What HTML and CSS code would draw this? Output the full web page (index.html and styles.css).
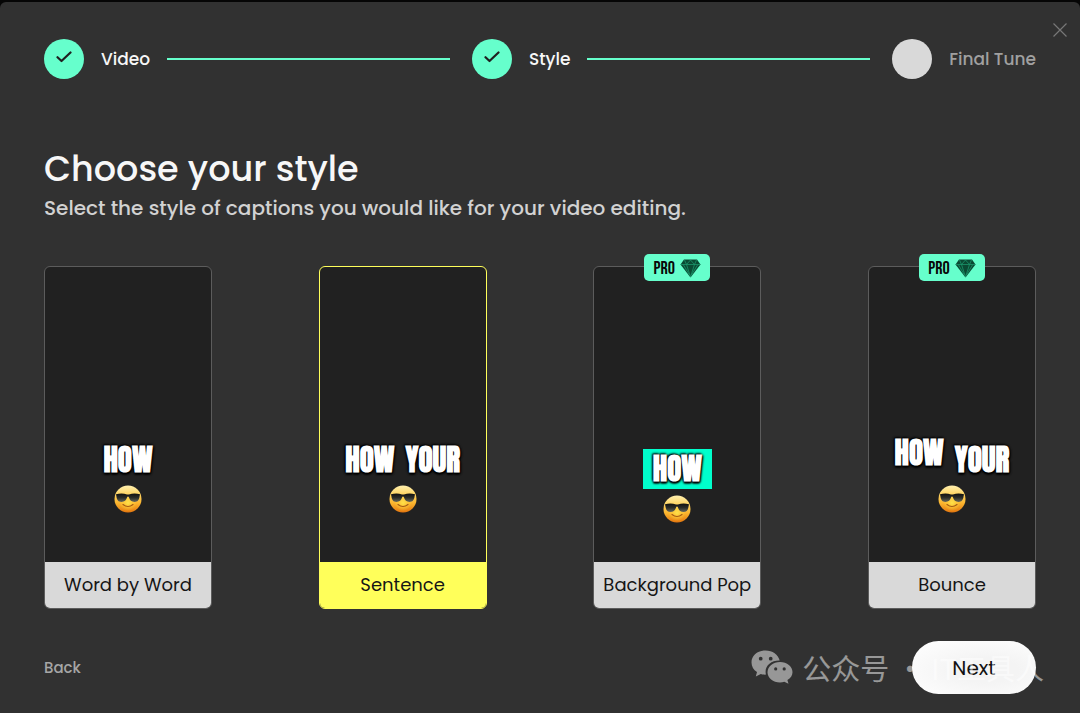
FILE: index.html
```html
<!DOCTYPE html>
<html lang="en">
<head>
<meta charset="utf-8">
<meta name="viewport" content="width=device-width, initial-scale=1">
<title>Choose your style</title>
<link rel="stylesheet" href="styles.css">
</head>
<body>
<svg class="defs" aria-hidden="true">
  <defs>
    <linearGradient id="face" x1="0" y1="0" x2="0" y2="1">
      <stop offset="0" stop-color="#fff0b0"/><stop offset=".3" stop-color="#ffd768"/><stop offset=".65" stop-color="#fbb52e"/><stop offset="1" stop-color="#e3760f"/>
    </linearGradient>
    <radialGradient id="glow" cx=".5" cy=".62" r=".35">
      <stop offset="0" stop-color="#ffe24a"/><stop offset="1" stop-color="#ffd53a" stop-opacity="0"/>
    </radialGradient>
    <linearGradient id="lens" x1="0" y1="0" x2="0" y2="1">
      <stop offset="0" stop-color="#111"/><stop offset=".5" stop-color="#2b2d28"/><stop offset="1" stop-color="#66675a"/>
    </linearGradient>
    <symbol id="cool" viewBox="0 0 28 28">
      <circle cx="14" cy="14" r="13.5" fill="url(#face)"/>
      <circle cx="14" cy="15" r="12" fill="url(#glow)"/>
      <path d="M2 9.2Q8 7.8 13 9.4h2Q20 7.8 26 9.2l-.4 2.1c-.5 4-2 5.6-5 5.6-3.200 0-4.800-1.600-5.700-4.600-.4-1-1.400-1-1.800 0-.9 3-2.500 4.600-5.700 4.600-3 0-4.500-1.600-5-5.600z" fill="url(#lens)"/>
      <path d="M9 19.500Q14 23.500 19 19.500" fill="none" stroke="#a65b13" stroke-width="1.200" stroke-linecap="round"/>
    </symbol>
    <symbol id="check" viewBox="0 0 16 12">
      <path d="M1.500 6.200 5.500 10 14.500 1.500" fill="none" stroke="#202020" stroke-width="2.200" stroke-linecap="round" stroke-linejoin="round"/>
    </symbol>
    <symbol id="gem" viewBox="0 0 21 19">
      <path d="M4 .5h13l3.500 5L10.500 18.500.5 5.500z" fill="#0a4a33"/>
      <path d="M4.500 1 6.500 5.500 10.500 1l4 4.500 2-4.500M.5 5.500h20M6.500 5.500l4 12.500 4-12.500M3.500 6l6 10M17.500 6l-6 10" fill="none" stroke="#1b9469" stroke-width=".8"/>
    </symbol>
  </defs>
</svg>
<main class="panel">
  <button class="close" type="button" aria-label="Close">
    <svg viewBox="0 0 14 14" width="14" height="14"><path d="M.5.5l13 13M13.500.5l-13 13" stroke="#777" stroke-width="1.200"/></svg>
  </button>
  <ol class="steps">
    <li class="step step-done"><span class="dot"><svg class="check"><use href="#check"/></svg></span><span class="step-name">Video</span><span class="line"></span></li>
    <li class="step step-done"><span class="dot"><svg class="check"><use href="#check"/></svg></span><span class="step-name">Style</span><span class="line"></span></li>
    <li class="step"><span class="dot"></span><span class="step-name">Final Tune</span></li>
  </ol>
  <header class="intro">
    <h1 class="title">Choose your style</h1>
    <p class="subtitle">Select the style of captions you would like for your video editing.</p>
  </header>
  <form class="form">
    <div class="cards">
      <label class="card">
        <input class="radio" type="radio" name="style" value="word">
        <span class="preview"><span class="caption"><span>HOW</span></span><svg class="emoji"><use href="#cool"/></svg></span>
        <span class="card-name">Word by Word</span>
      </label>
      <label class="card">
        <input class="radio" type="radio" name="style" value="sentence" checked>
        <span class="preview"><span class="caption"><span>HOW</span><span>YOUR</span></span><svg class="emoji"><use href="#cool"/></svg></span>
        <span class="card-name">Sentence</span>
      </label>
      <label class="card">
        <input class="radio" type="radio" name="style" value="pop">
        <span class="badge">PRO<svg class="gem"><use href="#gem"/></svg></span>
        <span class="preview preview-pop"><span class="caption"><span>HOW</span></span><svg class="emoji"><use href="#cool"/></svg></span>
        <span class="card-name">Background Pop</span>
      </label>
      <label class="card">
        <input class="radio" type="radio" name="style" value="bounce">
        <span class="badge">PRO<svg class="gem"><use href="#gem"/></svg></span>
        <span class="preview preview-bounce"><span class="caption"><span>HOW</span><span>YOUR</span></span><svg class="emoji"><use href="#cool"/></svg></span>
        <span class="card-name">Bounce</span>
      </label>
    </div>
    <div class="actions">
      <button class="back" type="button">Back</button>
      <button class="next" type="submit">Next</button>
      <div class="watermark">
        <svg class="wechat" viewBox="0 0 42 34">
          <path fill="#979797" fill-rule="evenodd" d="M14.500.5C6.500.5.500 5.700.500 12.500c0 4 2 7.300 5.500 9.600L4.800 26.500l5-2.500c1.700.5 3.300.7 5.200.6-2.200-8 4.700-14.300 13.700-14C27.300 4.500 21.500.5 14.500.5zM9.700 6.800a1.900 1.900 0 1 1 0 3.800 1.900 1.900 0 0 1 0-3.800zm10 0a1.900 1.900 0 1 1 0 3.800 1.900 1.900 0 0 1 0-3.800z"/>
          <path fill="#979797" fill-rule="evenodd" d="M29 12c-7 0-12.500 4.600-12.500 10.200S22 32.400 29 32.400c1.500 0 3-.2 4.300-.6l4.200 2-1.100-3.700c3.200-2 5.100-4.700 5.100-7.900C41.500 16.600 36 12 29 12zm-4.300 5.300a1.600 1.600 0 1 1 0 3.200 1.600 1.600 0 0 1 0-3.200zm8.500 0a1.600 1.600 0 1 1 0 3.200 1.600 1.600 0 0 1 0-3.200z"/>
        </svg>
        <span>公众号 · IT工具人</span>
      </div>
    </div>
  </form>
</main>
</body>
</html>
```
FILE: styles.css
```css
* { box-sizing: border-box; }
body {
  margin: 0;
  padding-top: 2px;
  min-height: 100vh;
  display: flex;
  background: #050505;
  font-family: Poppins, Inter, "Liberation Sans", sans-serif;
  color: #f7f7f7;
}
button { border: 0; background: none; font: inherit; padding: 0; cursor: pointer; }
.defs { position: absolute; width: 0; height: 0; }
.panel {
  position: relative;
  flex: 1;
  padding: 37px 44px 19px;
  background: #313131;
  border-radius: 6px 6px 0 0;
}
.close { position: absolute; top: 21px; right: 13px; width: 14px; height: 14px; display: flex; }

.steps { display: flex; gap: 22px; margin: 0; padding: 0; list-style: none; }
.step { display: flex; align-items: center; gap: 17px; color: #a0a0a0; font-size: 17px; line-height: 28px; font-weight: 500; }
.step-done { flex: 1 1 auto; color: #f7f7f7; }
.step-name { white-space: nowrap; }
.dot {
  display: grid;
  place-items: center;
  width: 40px;
  height: 40px;
  flex: none;
  border-radius: 50%;
  background: #d9d9d9;
}
.step-done .dot { background: #66ffcc; }
.check { width: 16px; height: 12px; margin-bottom: 4px; }
.line { flex: 1; height: 2px; background: #66ffcc; }

.intro { margin-top: 65px; }
.title { margin: 0; font-size: 35px; line-height: 50px; font-weight: 500; }
.subtitle { margin: 0; font-size: 20px; line-height: 28px; font-weight: 500; color: #d2d2d2; }

.cards { display: grid; grid-template-columns: repeat(4, 168px); justify-content: space-between; margin-top: 44px; }
.card {
  position: relative;
  display: flex;
  flex-direction: column;
  border: 1px solid #5c5c5c;
  border-radius: 6px;
  background: #212121;
  cursor: pointer;
}
.card:has(:checked) { border-color: #ffff5a; }
.radio { position: absolute; inset: 0; margin: 0; opacity: 0; }
.preview {
  display: flex;
  flex-direction: column;
  align-items: center;
  justify-content: flex-end;
  gap: 7px;
  height: 295px;
  padding-bottom: 49px;
}
.caption {
  display: flex;
  gap: 11px;
  font-family: Impact, Anton, "Liberation Sans Narrow", "Liberation Sans", sans-serif;
  font-size: 29px;
  line-height: 36px;
  font-weight: 700;
  color: #fff;
  text-shadow: 0 0 3px #000, 1px 1px 2px #000, -1px -1px 2px #000, 0 2px 2px #000;
}
.preview-pop { padding-bottom: 39px; gap: 6px; }
.preview-pop .caption { padding: 2px 10px; background: #00ffcc; }
.preview-bounce .caption { align-items: flex-start; }
.preview-bounce .caption :first-child { margin-top: -7px; }
.emoji { width: 28px; height: 28px; }
.card-name {
  padding: 9px 0;
  font-size: 18px;
  line-height: 28px;
  text-align: center;
  white-space: nowrap;
  color: #151515;
  background: #d9d9d9;
  border-radius: 0 0 5px 5px;
}
.card:has(:checked) .card-name { background: #ffff5a; }
.badge {
  position: absolute;
  top: -13px;
  left: 50px;
  display: flex;
  align-items: center;
  justify-content: center;
  gap: 5px;
  width: 66px;
  height: 27px;
  padding-top: 1px;
  border-radius: 5px;
  background: #66ffcc;
  color: #080808;
  font-family: "Bebas Neue", Oswald, "Liberation Sans Narrow", "Liberation Sans", sans-serif;
  font-size: 18px;
  line-height: 27px;
  font-weight: 400;
}
.gem { width: 21px; height: 19px; }

.actions { position: relative; display: flex; align-items: center; justify-content: space-between; margin-top: 32px; }
.back { color: #a6a6a6; font-size: 15px; line-height: 24px; font-weight: 500; }
.next {
  width: 124px;
  height: 53px;
  border-radius: 27px;
  background: radial-gradient(ellipse at 60% 55%, #f4f4f4 30%, #fdfdfd 85%);
  color: #111;
  font-size: 20px;
}
.watermark {
  position: absolute;
  right: -8px;
  top: 4px;
  display: flex;
  align-items: center;
  gap: 9px;
  color: rgba(255, 255, 255, .5);
  font-family: "Noto Sans CJK SC", sans-serif;
  font-size: 29px;
  line-height: 44px;
  white-space: nowrap;
  pointer-events: none;
}
.wechat { width: 42px; height: 34px; }
```
